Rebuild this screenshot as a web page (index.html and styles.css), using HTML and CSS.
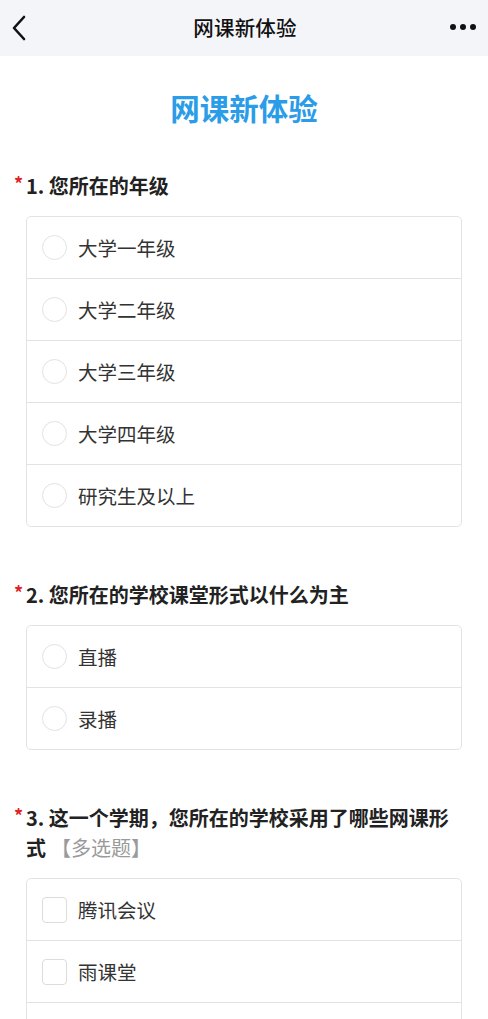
FILE: index.html
```html
<!DOCTYPE html>
<html lang="zh-CN">
<head>
<meta charset="utf-8">
<title>网课新体验</title>
<link rel="stylesheet" href="styles.css">
</head>
<body>
<header class="nav">
  <span class="nav-back">
    <svg width="16" height="26" viewBox="0 0 16 26"><path d="M12 2 L2 13 L12 24" fill="none" stroke="#111" stroke-width="2.6" stroke-linecap="round" stroke-linejoin="round"/></svg>
  </span>
  <span class="nav-title">网课新体验</span>
  <span class="nav-more"><i></i><i></i><i></i></span>
</header>
<main class="page">
  <h1 class="survey-title">网课新体验</h1>

  <section class="question">
    <div class="q-head"><span class="req">*</span>1. 您所在的年级</div>
    <div class="options">
      <div class="opt"><span class="radio"></span><span class="label">大学一年级</span></div>
      <div class="opt"><span class="radio"></span><span class="label">大学二年级</span></div>
      <div class="opt"><span class="radio"></span><span class="label">大学三年级</span></div>
      <div class="opt"><span class="radio"></span><span class="label">大学四年级</span></div>
      <div class="opt"><span class="radio"></span><span class="label">研究生及以上</span></div>
    </div>
  </section>

  <section class="question">
    <div class="q-head"><span class="req">*</span>2. 您所在的学校课堂形式以什么为主</div>
    <div class="options">
      <div class="opt"><span class="radio"></span><span class="label">直播</span></div>
      <div class="opt"><span class="radio"></span><span class="label">录播</span></div>
    </div>
  </section>

  <section class="question">
    <div class="q-head"><span class="req">*</span>3. 这一个学期，您所在的学校采用了哪些网课形式<span class="hint">【多选题】</span></div>
    <div class="options">
      <div class="opt"><span class="check"></span><span class="label">腾讯会议</span></div>
      <div class="opt"><span class="check"></span><span class="label">雨课堂</span></div>
      <div class="opt"><span class="check"></span></div>
    </div>
  </section>
</main>
</body>
</html>
```

FILE: styles.css
```css
* { box-sizing: border-box; }
html, body { margin: 0; padding: 0; }
body {
  background: #fff;
  font-family: "Noto Sans CJK SC", "Noto Sans", sans-serif;
  color: #333;
  overflow: hidden;
}
.nav {
  height: 56px;
  background: #f4f5f9;
  display: flex;
  align-items: center;
  justify-content: space-between;
  padding: 0 10px 2px 12px;
}
.nav-back { width: 40px; display: flex; align-items: center; padding-top: 1px; }
.nav-title {
  font-size: 20.5px;
  font-weight: 500;
  color: #111;
  letter-spacing: 0.2px;
}
.nav-more { width: 40px; display: flex; justify-content: flex-end; gap: 4px; padding-right: 2px; }
.nav-more i { width: 6px; height: 6px; border-radius: 50%; background: #111; display: block; }

.page { padding: 0 26px 0 26px; }
.survey-title {
  margin: 0;
  padding-top: 31px;
  text-align: center;
  font-size: 29.5px;
  line-height: 40px;
  font-weight: 700;
  color: #2b9ce8;
}
.question { margin-top: 53px; }
.question:first-of-type { margin-top: 44px; }
.q-head {
  position: relative;
  font-size: 20px;
  line-height: 30px;
  font-weight: 700;
  color: #222;
  margin-bottom: 15px;
}
.req {
  position: absolute;
  left: -12px;
  top: -3px;
  color: #e02424;
  font-size: 18px;
  font-weight: 700;
}
.hint { color: #9a9a9a; font-weight: 400; margin-left: 5px; }
.options {
  border: 1px solid #e3e3e3;
  border-radius: 5px;
  overflow: hidden;
}
.opt {
  height: 62px;
  display: flex;
  align-items: center;
  padding-left: 15px;
  gap: 11px;
  border-top: 1px solid #e3e3e3;
}
.opt:first-child { border-top: none; height: 61px; }
.radio {
  width: 25px; height: 25px;
  border: 1.5px solid #e2e2e2;
  border-radius: 50%;
  flex: none;
}
.check {
  width: 25px; height: 26px;
  border: 1.5px solid #dcdcdc;
  border-radius: 4px;
  flex: none;
}
.label { font-size: 19.5px; color: #333; }
```
